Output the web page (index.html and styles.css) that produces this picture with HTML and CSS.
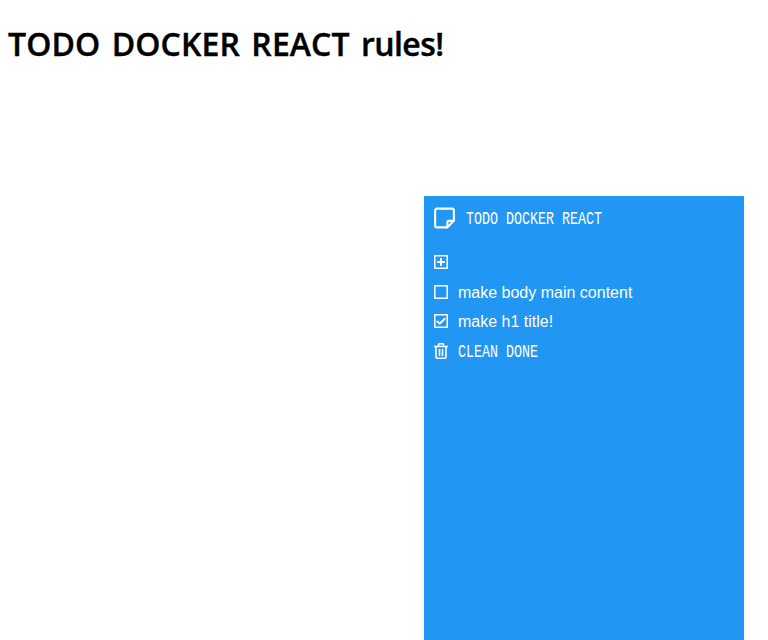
FILE: index.html
```
<!DOCTYPE html>
<html lang="en">
<head>
<meta charset="utf-8">
<title>TODO DOCKER REACT</title>
<link rel="stylesheet" href="styles.css">
</head>
<body>
<h1 class="title">TODO DOCKER REACT <span class="tail">rules!</span></h1>
<main class="panel">
  <header class="panel-header">
    <svg class="icon-large" viewBox="0 0 22 22"><path d="M3 1.2H19a1.8 1.8 0 0 1 1.8 1.8V14L14 20.8H3A1.8 1.8 0 0 1 1.2 19V3A1.8 1.8 0 0 1 3 1.2ZM20.5 14H15.5A1.5 1.5 0 0 0 14 15.5V20.5"/></svg>
    <span class="pixel">TODO DOCKER REACT</span>
  </header>
  <div class="row add"><svg class="icon" viewBox="0 0 14 14"><rect x=".75" y=".75" width="12.5" height="12.5" rx=".5"/><path class="plus" d="M7 3V11M3 7H11"/></svg></div>
  <div class="row"><svg class="icon" viewBox="0 0 14 14"><rect x=".75" y=".75" width="12.5" height="12.5" rx=".5"/></svg><span class="label">make body main content</span></div>
  <div class="row done"><svg class="icon" viewBox="0 0 14 14"><rect x=".75" y=".75" width="12.5" height="12.5" rx=".5"/><path class="check" d="M2.8 7L5.7 9.7L11.2 4.3"/></svg><span class="label">make h1 title!</span></div>
  <div class="row clean"><svg class="icon trash" viewBox="0 0 14 16"><path d="M0 3.5H14M4 3L5 .8H9L10 3M2 3.5V14Q2 15.2 3.2 15.2H10.8Q12 15.2 12 14V3.5M5.5 6V13M8.5 6V13"/></svg><span class="pixel">CLEAN DONE</span></div>
</main>
</body>
</html>
```
FILE: styles.css
```
body {
  margin: 0;
  height: 640px;
  overflow: hidden;
  background: #fff;
  font: 16px/20px "Liberation Sans", Arial, sans-serif;
}
.title {
  margin: 0 0 0 8px;
  padding-top: 22px;
  height: 174px;
  font: 600 32px/44px "Open Sans", sans-serif;
  letter-spacing: .1px;
  word-spacing: 3px;
  -webkit-text-stroke: .4px #000;
  white-space: nowrap;
  color: #000;
}
.tail { letter-spacing: -.6px; }
.panel {
  box-sizing: border-box;
  width: 320px;
  height: 444px;
  margin-left: 424px;
  padding: 11px 10px;
  background: #2196f3;
  color: #fff;
}
.panel-header {
  display: flex;
  align-items: center;
  gap: 10px;
  height: 22px;
  margin-bottom: 23px;
}
.row {
  display: flex;
  align-items: center;
  gap: 10px;
  height: 20px;
}
.add { margin-bottom: 10px; }
.done { margin-top: 9px; }
.clean { margin-top: 10px; }
.label { padding-top: 2px; }
svg {
  flex: none;
  fill: none;
  stroke: #fff;
  stroke-width: 1.6;
}
.icon { width: 14px; height: 14px; }
.icon-large { width: 21px; height: 22px; margin-right: 1px; stroke-width: 2.2; }
.plus, .check { stroke-width: 1.9; }
.trash { height: 16px; }
.pixel {
  font: 13.33px/20px "Liberation Mono", monospace;
  transform: translateY(1.5px) scaleY(1.35);
  white-space: pre;
}
```
